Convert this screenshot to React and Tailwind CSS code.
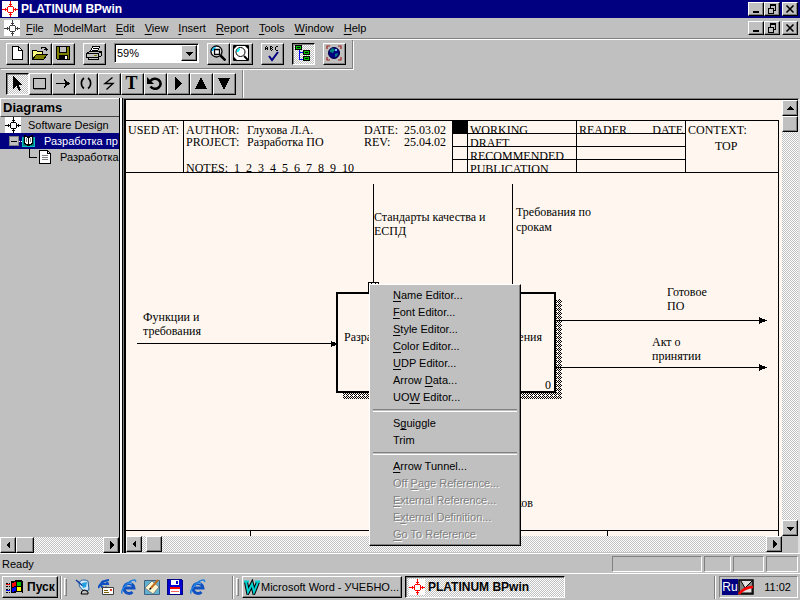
import React from "react";

const RAISED =
  "bg-[#c0c0c0] border border-t-white border-l-white border-r-black border-b-black shadow-[inset_-1px_-1px_#808080]";
const DITHER =
  "bg-[conic-gradient(#ffffff_25%,#c0c0c0_0_50%,#ffffff_0_75%,#c0c0c0_0)] bg-[length:2px_2px]";
const PRESSED =
  "border border-t-black border-l-black border-r-white border-b-white shadow-[inset_1px_1px_#808080]";

function Svg({ w = 16, h = 16, smooth = false, children, className = "" }) {
  return (
    <svg
      width={w}
      height={h}
      viewBox={`0 0 ${w} ${h}`}
      fill="none"
      stroke="#000"
      shapeRendering={smooth ? "auto" : "crispEdges"}
      className={"block shrink-0 " + className}
      aria-hidden="true"
    >
      {children}
    </svg>
  );
}

function Logo({ color = "#ff0000" }) {
  return (
    <Svg>
      <path fill="#fff" stroke="none" d="M0 0h16v16H0z" />
      <path
        stroke={color}
        d="M6 5.500h5M6 11.500h5M5.500 6v5M11.500 6v5M8.500 0v5M8.500 12v4M0 8.500h5M12 8.500h4M7 3.500h3M7 13.500h3M3.500 7v3M13.500 7v3"
      />
    </Svg>
  );
}

function NewIcon() {
  return (
    <Svg>
      <path fill="#fff" d="M3.5 1.5h6l4 4v9h-10z" />
      <path d="M9.5 1.5v4h4" />
    </Svg>
  );
}
function OpenIcon() {
  return (
    <Svg>
      <path fill="#ffff80" d="M.5 14.500v-9h4l1 1h5v3" />
      <path fill="#808000" d="M.5 14.500l4-5.500h11l-4 5.500z" />
      <path d="M9 3.500l1-1h3l1 1v2M12 4.500h4" />
    </Svg>
  );
}
function SaveIcon() {
  return (
    <Svg>
      <path fill="#808000" d="M1.5 1.5h13v13h-12l-1-1z" />
      <path fill="#c0c0c0" d="M4.500 1.5h7v6h-7z" />
      <path fill="#000" d="M4.500 10.500h8v4h-8z" />
      <path fill="#fff" stroke="none" d="M10 11h2v3h-2z" />
    </Svg>
  );
}
function PrintIcon() {
  return (
    <Svg>
      <path fill="#c0c0c0" d="M.5 8.500l3-2h11l-2 2zM.5 8.500h12v4H.5zM12.500 8.500l3-2v4l-3 2M2.500 12.500h10v2h-10z" />
      <path fill="#fff" d="M4.500 6.500l2-5h7l-2 5z" />
      <path stroke="#808000" d="M8 10.500h3" />
      <path d="M7 3.500h5M6 5.500h5" />
    </Svg>
  );
}
function ZoomIcon() {
  return (
    <Svg smooth>
      <circle cx="6.500" cy="6.500" r="5.500" fill="#fff" strokeWidth="1.300" />
      <path stroke="#00c0ff" strokeWidth="1.500" d="M2.500 6a4 4 0 0 1 3-3.500" />
      <path d="M4.500 4.500h5v5h-5z" strokeWidth="1.300" />
      <path strokeWidth="2.500" d="M10.500 10.500l5 5" />
    </Svg>
  );
}
function FitIcon() {
  return (
    <Svg smooth>
      <path fill="#fff" d="M.5.500h15v15H.5z" />
      <path fill="#000" stroke="none" d="M1 1h3L1 4zM15 1h-3l3 3zM1 15v-3l3 3z" />
      <circle cx="7.500" cy="7" r="4.500" fill="#fff" strokeWidth="1" />
      <path stroke="#00ffff" strokeWidth="2" d="M4.500 7a3.500 3.500 0 0 1 2.500-3" />
      <path strokeWidth="2" d="M11 11l4 4" />
    </Svg>
  );
}
function SpellIcon() {
  return (
    <Svg w={18} h={18}>
      <path d="M2.500 6V3M4.500 6V3M3 2.500h1M3 4.500h2M7.500 6V2M8 2.500h1M8 4.500h1M8 6.500h1M9.500 3v1M9.500 5v1M13 2.500h2M12.500 3v3M13 6.500h2" />
      <path stroke="#000080" strokeWidth="2" shapeRendering="auto" d="M6 12l3 4 6-8" />
    </Svg>
  );
}
function TreeIcon() {
  return (
    <Svg w={18} h={18}>
      <path stroke="#0000ff" d="M5.500 6v9.500H10M5.500 8.500H10" />
      <path fill="#00c000" d="M1.500 1.500h6v4h-6zM9.500 6.500h6v4h-6zM9.500 12.500h6v4h-6z" />
      <path d="M3 3.500h3M11 8.500h3M11 14.500h3" />
    </Svg>
  );
}
function GlobeIcon() {
  return (
    <Svg smooth>
      <circle cx="8" cy="8" r="5.500" fill="#000080" stroke="#000040" />
      <path fill="#008080" stroke="none" d="M4 5l3-2 2 2-2 3-3-1zM9 9l3-1-1 3-2 1z" />
      <path fill="#80c0ff" stroke="none" d="M9 4h2v2H9z" />
      <path stroke="#a02020" strokeWidth="1.200" d="M1 4V1h3M12 1h3v3M15 12v3h-3M4 15H1v-3" />
    </Svg>
  );
}

const TOOL_ICONS = {
  Pointer: (
    <Svg>
      <path fill="#000" stroke="none" d="M4 1l9 9H9.500l2.500 5-2 1-2.500-5L4 14z" />
    </Svg>
  ),
  Box: (
    <Svg>
      <path d="M1.500 3.500h12v10h-12z" />
      <path stroke="#808080" d="M2 14.500h12" />
    </Svg>
  ),
  Arrow: (
    <Svg>
      <path d="M1 8.500h13" />
      <path fill="#000" stroke="none" d="M9 4l6 4.500L9 13l1.500-4.500z" />
    </Svg>
  ),
  Tunnel: (
    <Svg smooth>
      <path strokeWidth="1.600" d="M6 3C2.500 5.500 2.500 11 6 13.500M10 3c3.500 2.500 3.500 8 0 10.500" />
    </Svg>
  ),
  Squiggle: (
    <Svg smooth>
      <path strokeWidth="1.400" d="M11.500 2.500L4 8.500h8L5.500 14.500" />
    </Svg>
  ),
  Rotate: (
    <Svg smooth>
      <path strokeWidth="2.600" d="M3.500 6a5.500 5 0 1 1 0 5.500" />
      <path fill="#000" stroke="none" d="M0 2v7h7z" />
    </Svg>
  ),
  Next: (
    <Svg>
      <path fill="#000" stroke="none" d="M5 2l7 6.500L5 15z" />
    </Svg>
  ),
  Up: (
    <Svg>
      <path fill="#000" stroke="none" d="M8 2l6 12H2z" />
    </Svg>
  ),
  Down: (
    <Svg>
      <path fill="#000" stroke="none" d="M2 3h12L8 15z" />
    </Svg>
  ),
};

function ToolButton({ label, pressed = false, children }) {
  return (
    <button
      type="button"
      aria-label={label}
      aria-pressed={pressed}
      className={
        "flex h-[22px] w-[23px] items-center justify-center pr-0.5 pb-0.5 " +
        (pressed ? PRESSED + " " + DITHER : RAISED)
      }
    >
      {children}
    </button>
  );
}

function WindowButtons() {
  const cls = "flex h-[14px] w-4 items-center justify-center " + RAISED;
  return (
    <div className="ml-auto flex pr-0.5">
      <button type="button" aria-label="Minimize" className={cls}>
        <Svg w={12} h={10}>
          <path strokeWidth="2" d="M3 8h6" />
        </Svg>
      </button>
      <button type="button" aria-label="Restore" className={cls}>
        <Svg w={12} h={10}>
          <path d="M4 1h6M4 .5h6M4.500 1v3M9.500 1v5M8 6.500h2M2 4h6M2.500 4v5.500h5V4" />
        </Svg>
      </button>
      <button type="button" aria-label="Close" className={"ml-0.5 " + cls}>
        <Svg w={12} h={10} smooth>
          <path strokeWidth="1.600" d="M2.500 1.500l7 7M9.500 1.500l-7 7" />
        </Svg>
      </button>
    </div>
  );
}

const ARROWS = {
  left: "M7 1v8L3 5z",
  right: "M4 1v8l4-4z",
  up: "M1 7h8L5 3z",
  down: "M1 4h8L5 8z",
};
function ScrollButton({ dir }) {
  return (
    <button
      type="button"
      aria-label={"Scroll " + dir}
      className={"flex size-4 shrink-0 items-center justify-center " + RAISED}
    >
      <Svg w={10} h={10}>
        <path fill="#000" stroke="none" d={ARROWS[dir]} />
      </Svg>
    </button>
  );
}

function Hot({ text, at = 0 }) {
  if (at < 0) return text;
  return (
    <>
      {text.slice(0, at)}
      <span className="underline underline-offset-2">{text[at]}</span>
      {text.slice(at + 1)}
    </>
  );
}

function TitleBar() {
  return (
    <header className="flex h-[18px] items-center gap-[3px] bg-[#000080] pl-0.5 text-[12px] font-bold text-white">
      <Logo />
      <h1>PLATINUM BPwin</h1>
      <WindowButtons />
    </header>
  );
}

function MenuBar() {
  const items = ["File", "ModelMart", "Edit", "View", "Insert", "Report", "Tools", "Window", "Help"];
  return (
    <nav className="flex h-[21px] items-center border-b border-[#808080] pl-1 shadow-[0_1px_#fff]">
      <Logo color="#404040" />
      <div className="flex pl-px">
        {items.map((item) => (
          <button type="button" key={item} className="px-[5px]">
            <Hot text={item} />
          </button>
        ))}
      </div>
      <WindowButtons />
    </nav>
  );
}

function Toolbars() {
  return (
    <div className="mt-px">
      <div
        role="toolbar"
        aria-label="Standard"
        className="flex h-[29px] w-fit gap-2 border-r border-b border-[#808080] pt-[3px] pr-[6px] pl-1.5 shadow-[1px_1px_#fff]"
      >
        <div className="flex">
          <ToolButton label="New"><NewIcon /></ToolButton>
          <ToolButton label="Open"><OpenIcon /></ToolButton>
          <ToolButton label="Save"><SaveIcon /></ToolButton>
        </div>
        <ToolButton label="Print"><PrintIcon /></ToolButton>
        <div className="relative">
          <select
            aria-label="Zoom"
            defaultValue="59%"
            className="block h-5 w-[85px] appearance-none border border-t-[#808080] border-r-white border-b-white border-l-[#808080] bg-white pl-0.5 text-[11px] shadow-[inset_1px_1px_#000]"
          >
            <option>59%</option>
            <option>100%</option>
          </select>
          <span
            className={
              "pointer-events-none absolute top-0.5 right-0.5 flex h-4 w-4 items-center justify-center " + RAISED
            }
          >
            <Svg w={10} h={10}>
              <path fill="#000" stroke="none" d={ARROWS.down} />
            </Svg>
          </span>
        </div>
        <div className="flex">
          <ToolButton label="Zoom area"><ZoomIcon /></ToolButton>
          <ToolButton label="Fit to window"><FitIcon /></ToolButton>
        </div>
        <ToolButton label="Spelling"><SpellIcon /></ToolButton>
        <ToolButton label="Model explorer" pressed><TreeIcon /></ToolButton>
        <ToolButton label="ModelMart"><GlobeIcon /></ToolButton>
      </div>
      <div
        role="toolbar"
        aria-label="Drawing tools"
        className="mt-px flex h-7 w-fit border-r border-[#808080] pt-[3px] pr-1.5 pl-1.5 shadow-[1px_0_#fff]"
      >
        {["Pointer", "Box", "Arrow", "Tunnel", "Squiggle", "Text", "Rotate", "Next", "Up", "Down"].map((name) => (
          <ToolButton key={name} label={name} pressed={name === "Pointer"}>
            {name === "Text" ? (
              <span className="font-['Liberation_Serif',serif] text-[18px] leading-4 font-bold">T</span>
            ) : (
              TOOL_ICONS[name]
            )}
          </ToolButton>
        ))}
      </div>
    </div>
  );
}

function Explorer() {
  return (
    <aside className="flex w-[120px] shrink-0 flex-col border-r border-black">
      <h2 className="h-[19px] border-t border-b border-l border-t-white border-b-[#404040] border-l-white pl-0.5 text-[13px] leading-[17px] font-bold">
        Diagrams
      </h2>
      <ul className="flex-1 overflow-hidden leading-4 whitespace-nowrap">
        <li className="flex h-4 items-center pl-[5px]">
          <Logo color="#000" />
          <span className="ml-[7px]">Software Design</span>
        </li>
        <li className="flex h-4 items-center bg-[#000080] pl-2 text-white">
          <Svg w={28} h={14}>
            <path fill="#c0c0c0" stroke="#808080" d="M1.500 2.500h9v9h-9z" />
            <path d="M3 7.500h6" />
            <path stroke="#fff" strokeDasharray="1 1" d="M11 7.500h4" />
            <path fill="#008080" stroke="#00c0c0" d="M14.500 3v9.500h12V3" />
            <path fill="#fff" d="M16.500 1.500l4 2v8l-4-2zM24.500 1.500l-4 2v8l4-2z" />
            <path stroke="#808080" d="M18.500 4v4M22.500 4v4" />
          </Svg>
          <span className="ml-2">Разработка пр</span>
        </li>
        <li className="flex h-4 items-center pl-7">
          <Svg w={24} h={16}>
            <path d="M1.500 0v8.500H9" />
            <path fill="#fff" d="M11.500 1.500h8l3 3v10h-11z" />
            <path d="M19.500 1.500v3h3" />
            <path stroke="#808080" d="M14 6.500h6M14 8.500h6M14 10.500h6" />
          </Svg>
          <span className="ml-2">Разработка</span>
        </li>
      </ul>
      <div className={"flex h-4 " + DITHER}>
        <ScrollButton dir="left" />
        <div className={"h-4 w-[18px] " + RAISED} />
        <div className="flex-1" />
        <ScrollButton dir="right" />
      </div>
    </aside>
  );
}

function SheetHeader() {
  const status = ["WORKING", "DRAFT", "RECOMMENDED", "PUBLICATION"];
  return (
    <div className="flex h-[52px] overflow-hidden border-b border-black leading-3 whitespace-nowrap">
      <div className="w-[58px] shrink-0 border-r border-black pt-[3px] pl-0.5">USED AT:</div>
      <div className="flex w-[269px] shrink-0 flex-col border-r border-black pt-[3px] pr-1.5 pl-0.5">
        <div className="flex">
          <span className="w-[61px]">AUTHOR:</span>
          <span>Глухова Л.А.</span>
          <span className="ml-auto w-[39px]">DATE:</span>
          <span className="w-[43px] text-right">25.03.02</span>
        </div>
        <div className="flex">
          <span className="w-[61px]">PROJECT:</span>
          <span>Разработка ПО</span>
          <span className="ml-auto w-[39px]">REV:</span>
          <span className="w-[43px] text-right">25.04.02</span>
        </div>
        <div className="flex gap-1.5 pt-3.5">
          <span>NOTES:</span>
          {[1, 2, 3, 4, 5, 6, 7, 8, 9, 10].map((n) => (
            <span key={n}>{n}</span>
          ))}
        </div>
      </div>
      <table className="w-[233px] shrink-0 table-fixed border-separate border-spacing-0 self-start">
        <colgroup>
          <col className="w-[15px]" />
          <col className="w-[109px]" />
          <col className="w-[109px]" />
        </colgroup>
        <tbody>
          {status.map((name, i) => (
            <tr key={name}>
              <td className={"border-r border-b border-black p-0 " + (i === 0 ? "bg-black" : "")} />
              <td className="border-r border-b border-black p-0 pl-0.5 align-top">
                <div className="h-3 overflow-hidden pt-[3px]">{name}</div>
              </td>
              <td className="border-r border-b border-black p-0 pr-0.5 pl-0.5 align-top">
                {i === 0 && (
                  <div className="flex h-3 justify-between overflow-hidden pt-[3px]">
                    <span>READER</span>
                    <span>DATE</span>
                  </div>
                )}
              </td>
            </tr>
          ))}
        </tbody>
      </table>
      <div className="flex-1 pt-[3px] pl-0.5">
        <div>CONTEXT:</div>
        <div className="pt-1 pl-[27px]">TOP</div>
      </div>
    </div>
  );
}

function Diagram() {
  return (
    <div className="relative flex-1 overflow-hidden text-[12px] leading-[14px] whitespace-nowrap">
      <svg
        width="652"
        height="357"
        viewBox="126 173 652 357"
        className="absolute top-0 left-0"
        shapeRendering="crispEdges"
        fill="none"
        stroke="#000"
        aria-hidden="true"
      >
        <defs>
          <pattern id="hatch" width="4" height="4" patternUnits="userSpaceOnUse">
            <path stroke="none" fill="#000" d="M0 0h1v1H0zM2 0h1v1H2zM1 1h1v1H1zM2 2h1v1H2zM0 2h1v1H0zM3 3h1v1H3zM3 1h1v1H3z" />
          </pattern>
        </defs>
        <path fill="url(#hatch)" stroke="none" d="M556 299h6v100H343v-6h213z" />
        <path strokeWidth="2" d="M337 293h218v99H337z" />
        <path d="M137 343.500h199M556 320.500h206M556 367.500h206M373.500 184v98M512.500 184v108M368.500 292v-9.500h10v5M371.500 282v4M375.500 282v4" />
        <path fill="#000" stroke="none" d="M331 341l5 2v2l-5 2zM759 317l8 3.500-8 3.500zM759 364l8 3.500-8 3.500z" />
      </svg>
      <p className="absolute top-[137px] left-[17px]">Функции и<br />требования</p>
      <p className="absolute top-[37px] left-[248px]">Стандарты качества и<br />ЕСПД</p>
      <p className="absolute top-8 left-[390px] leading-[15px]">Требования по<br />срокам</p>
      <p className="absolute top-[112px] left-[541px]">Готовое<br />ПО</p>
      <p className="absolute top-[162px] left-[526px]">Акт о<br />принятии</p>
      <div className="absolute top-[157px] left-[218px] flex w-[198px] justify-between">
        <span>Разработка</span>
        <span>обеспечения</span>
      </div>
      <span className="absolute top-[205px] left-[419px]">0</span>
      <span className="absolute top-[323px] left-[390px]">ков</span>
    </div>
  );
}

function MenuItem({ text, at, disabled = false }) {
  return (
    <button
      type="button"
      role="menuitem"
      disabled={disabled}
      className={
        "block h-[17px] w-full pl-[21px] text-left leading-[17px] " +
        (disabled ? "text-[#808080] [text-shadow:1px_1px_#fff]" : "")
      }
    >
      <Hot text={text} at={at} />
    </button>
  );
}

function ContextMenu() {
  const line = <div role="separator" className="mx-px my-[3px] h-[3px] border-t border-b border-t-[#808080] border-b-white" />;
  return (
    <div
      role="menu"
      className={"absolute top-[185px] left-[245px] z-10 w-[152px] px-0.5 pt-0.5 pb-0.5 " + RAISED}
    >
      <MenuItem text="Name Editor..." at={0} />
      <MenuItem text="Font Editor..." at={0} />
      <MenuItem text="Style Editor..." at={0} />
      <MenuItem text="Color Editor..." at={0} />
      <MenuItem text="UDP Editor..." at={0} />
      <MenuItem text="Arrow Data..." at={6} />
      <MenuItem text="UOW Editor..." at={2} />
      {line}
      <MenuItem text="Sguiggle" at={1} />
      <MenuItem text="Trim" at={-1} />
      {line}
      <MenuItem text="Arrow Tunnel..." at={0} />
      <MenuItem text="Off Page Reference..." at={4} disabled />
      <MenuItem text="External Reference..." at={0} disabled />
      <MenuItem text="External Definition..." at={1} disabled />
      <MenuItem text="Go To Reference" at={0} disabled />
    </div>
  );
}

function Sheet() {
  return (
    <main className="relative flex min-w-0 flex-1 flex-col border-t border-r-2 border-l border-t-[#808080] border-r-[#dfdfdf] border-l-[#808080]">
      <div className="flex flex-1 border-t border-l-2 border-black">
        <div className="flex min-w-0 flex-1 flex-col overflow-hidden bg-[#fff7ef] pt-5 pr-[3px] font-['Liberation_Serif',serif] text-[12px]">
          <div className="flex flex-1 flex-col border-t border-r border-black">
            <SheetHeader />
            <Diagram />
            <div className="flex h-1.5 border-t border-black">
              <div className="w-[125px] border-r border-black" />
              <div className="w-[357px] border-r border-black" />
            </div>
          </div>
        </div>
        <div className={"flex w-4 flex-col " + DITHER}>
          <ScrollButton dir="up" />
          <div className={"size-4 " + RAISED} />
          <div className="flex-1" />
          <ScrollButton dir="down" />
        </div>
      </div>
      <div className="flex h-[17px] border-l-2 border-black">
        <div className={"flex h-4 flex-1 " + DITHER}>
          <ScrollButton dir="left" />
          <div className={"ml-1 size-4 " + RAISED} />
          <div className="flex-1" />
          <ScrollButton dir="right" />
        </div>
        <div className="w-4" />
      </div>
      <ContextMenu />
    </main>
  );
}

function StatusBar() {
  const pane = "h-4 border border-t-[#808080] border-l-[#808080] border-r-white border-b-white";
  return (
    <footer className="flex h-5 items-center border-t border-white pr-0.5 pl-0.5">
      <span className="flex-1">Ready</span>
      <div className="flex gap-0.5">
        <div className={"w-[90px] " + pane} />
        <div className={"w-[27px] " + pane} />
        <div className={"w-[31px] " + pane} />
        <div className={"w-[32px] " + pane} />
      </div>
    </footer>
  );
}

function IeIcon() {
  return (
    <Svg smooth>
      <path stroke="#1050c0" strokeWidth="3" d="M3.500 9H13a5 5 0 1 0-1.500 4" />
      <path stroke="#60b0ff" strokeWidth="1" d="M4 8a4.500 4.500 0 0 1 7-3" />
      <path stroke="#2080e0" strokeWidth="1.500" d="M1.500 14C-1 15 2 7 9 2.500c4-2.500 6-1.500 5.500.500" />
    </Svg>
  );
}

const QUICK = [
  [
    "View channels",
    <Svg smooth>
      <path fill="#d0e8f8" stroke="#2060a0" d="M4 4c0 6 5 9 10 7L13 2C9 0 5 1 4 4z" />
      <path stroke="#1040a0" strokeWidth="1.500" d="M1 1l7 6" />
      <path fill="#20a0e0" stroke="none" d="M7 4l5-1-1 5-3 1z" />
      <path fill="#c0c0c0" d="M7 12l3-1 3 2v2H6z" />
    </Svg>,
  ],
  [
    "Outlook Express",
    <Svg smooth>
      <path stroke="#1050c0" strokeWidth="2" d="M3 5h7a3.500 3.500 0 1 0-1 3M1 9C0 7 5 1 11 1" />
      <path fill="#fff" stroke="#404040" d="M4.500 8.500h11v7h-11z" />
      <path stroke="#806000" d="M6 13.500h5M6 11.500h4" />
      <path fill="#e04020" stroke="none" d="M12 10h2v2h-2z" />
    </Svg>,
  ],
  ["Internet Explorer", <IeIcon />],
  [
    "Show desktop",
    <Svg smooth>
      <path fill="#60b0d0" stroke="#406080" d="M.5 1.500h15v14H.5z" />
      <path fill="#fff8d0" stroke="#808080" d="M1 9l7-7 7 6-6 7z" />
      <path stroke="#c07020" strokeWidth="2" d="M7 9l7-8" />
      <path strokeWidth="1.500" d="M5.500 10.500l1.500-1.500" />
    </Svg>,
  ],
  [
    "Disk",
    <Svg>
      <path fill="#0000d0" stroke="#000080" d="M.5.500h14l1 1v14H.5z" />
      <path fill="#fff" stroke="none" d="M4 1h8v5H4zM3 8h10v7H3z" />
      <path fill="#0000d0" stroke="none" d="M9 2h2v3H9z" />
      <path stroke="#ff0000" strokeWidth="2" d="M3 9h10" />
      <path stroke="#ff6060" d="M4 12.500h8" />
    </Svg>,
  ],
  ["Browser", <IeIcon />],
];

function Grip() {
  return (
    <div className="flex gap-0.5">
      <div className="h-[23px] w-0.5 border-r border-l border-r-white border-l-[#808080]" />
      <div className="my-auto h-[18px] w-[3px] border border-t-white border-r-[#808080] border-b-[#808080] border-l-white" />
    </div>
  );
}

function TaskBar() {
  return (
    <div className="flex h-[27px] items-center border-t border-white pr-0.5 pl-0.5">
      <button
        type="button"
        className={"flex h-[22px] w-14 items-center gap-1 pl-[3px] text-[12px] font-bold " + RAISED}
      >
        <Svg w={17} h={14}>
          <path fill="#000" stroke="none" d="M5 1h3l2-1h5l2 1v12l-2-1h-4l-3 1H5zM0 3h2v1H0zM3 3h1v1H3zM0 6h2v1H0zM3 6h1v1H3zM0 9h2v1H0zM3 9h1v1H3zM0 12h2v1H0zM3 12h1v1H3z" />
          <path fill="#ff0000" stroke="none" d="M6 3l4-1v4l-4 1zM0 4h4v1H0z" />
          <path fill="#00c000" stroke="none" d="M11 2h4v4h-4z" />
          <path fill="#0000ff" stroke="none" d="M6 8l4-1v4l-4 1zM0 10h4v1H0z" />
          <path fill="#ffff00" stroke="none" d="M11 7h4v4h-4z" />
        </Svg>
        Пуск
      </button>
      <div className="ml-0.5"><Grip /></div>
      <div className="ml-2 flex gap-[7px]">
        {QUICK.map(([label, icon]) => (
          <button type="button" key={label} aria-label={label}>
            {icon}
          </button>
        ))}
      </div>
      <div className="ml-[26px]"><Grip /></div>
      <button
        type="button"
        className={"ml-[3px] flex h-[22px] w-40 items-center gap-px pl-px whitespace-nowrap " + RAISED}
      >
        <Svg smooth>
          <path stroke="#000" strokeWidth="4" d="M2 3l2 10 4-8 2 8 4-10" />
          <path stroke="#00d0d0" strokeWidth="2" d="M2 3l2 10 4-8 2 8 4-10M0 2.500h5M11 2.500h5" />
        </Svg>
        Microsoft Word - УЧЕБНО...
      </button>
      <button
        type="button"
        aria-pressed="true"
        className={
          "ml-[3px] flex h-[22px] w-40 items-center gap-[3px] pl-[3px] text-[12px] font-bold whitespace-nowrap " +
          PRESSED + " " + DITHER
        }
      >
        <Logo />
        PLATINUM BPwin
      </button>
      <div className="ml-auto h-[23px] w-0.5 border-r border-l border-r-white border-l-[#808080]" />
      <div className="ml-[3px] flex h-[22px] w-[79px] items-center border border-t-[#808080] border-r-white border-b-white border-l-[#808080] pl-0.5">
        <span className="h-4 w-4 bg-[#000080] text-center text-[12px] leading-4 text-white">Ru</span>
        <Svg smooth>
          <path fill="#808080" strokeWidth="1.500" d="M1 1h14v14H1z" />
          <path fill="#e0e0e0" d="M3 2l4 7 7-7M2 14h12V8" />
          <path stroke="#ff0000" strokeWidth="2.500" d="M1 15c4-5 8-7 14-7" />
        </Svg>
        <time className="ml-auto pr-1.5 text-[11px]">11:02</time>
      </div>
    </div>
  );
}

export default function App() {
  return (
    <div className="flex min-h-screen w-full flex-col bg-[#c0c0c0] font-['Liberation_Sans',Arial,sans-serif] text-[11px] leading-4 text-black">
      <TitleBar />
      <MenuBar />
      <Toolbars />
      <div className="flex flex-1">
        <Explorer />
        <div className="w-[3px] border-r border-black bg-white" />
        <Sheet />
      </div>
      <StatusBar />
      <TaskBar />
    </div>
  );
}
